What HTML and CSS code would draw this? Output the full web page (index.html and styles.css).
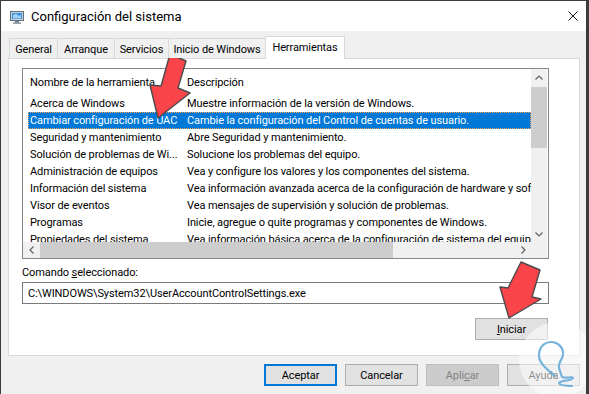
FILE: index.html
```html
<!DOCTYPE html>
<html lang="es">
<head>
  <meta charset="UTF-8">
  <title>Configuración del sistema</title>
  <link rel="stylesheet" href="styles.css">
</head>
<body>
  <div class="window">
    <div class="titlebar">
      <svg class="app-icon" width="14" height="14" viewBox="0 0 14 14">
        <rect x="0.5" y="1.5" width="13" height="9" fill="#c9d3dc" stroke="#5f6f7e"/>
        <rect x="2" y="3" width="10" height="6" fill="#3b8fd9"/>
        <path d="M3 5 L6 3.5 L9 6 L11 4.5 L11 8.5 L3 8.5 Z" fill="#9fd0f5"/>
        <rect x="5" y="11" width="4" height="1.5" fill="#6b7a88"/>
        <rect x="3" y="12.5" width="8" height="1.2" fill="#6b7a88"/>
      </svg>
      <span class="title">Configuración del sistema</span>
      <svg class="close" width="10" height="10" viewBox="0 0 10 10">
        <path d="M0.5 0.5 L9.5 9.5 M9.5 0.5 L0.5 9.5" stroke="#111" stroke-width="1"/>
      </svg>
    </div>

    <div class="main">
      <div class="tabs">
        <div class="tab t-general">General</div>
        <div class="tab t-arranque">Arranque</div>
        <div class="tab t-servicios">Servicios</div>
        <div class="tab t-inicio">Inicio de Windows</div>
        <div class="tab t-herr active">Herramientas</div>
      </div>

      <div class="panel">
        <div class="listbox">
          <div class="list-top">
            <div class="list-view">
              <div class="row head"><span class="c1">Nombre de la herramienta</span><span class="c2">Descripción</span></div>
              <div class="row"><span class="c1">Acerca de Windows</span><span class="c2">Muestre información de la versión de Windows.</span></div>
              <div class="row selected"><span class="c1">Cambiar configuración de UAC</span><span class="c2">Cambie la configuración del Control de cuentas de usuario.</span></div>
              <div class="row"><span class="c1">Seguridad y mantenimiento</span><span class="c2">Abre Seguridad y mantenimiento.</span></div>
              <div class="row"><span class="c1">Solución de problemas de Wi...</span><span class="c2">Solucione los problemas del equipo.</span></div>
              <div class="row"><span class="c1">Administración de equipos</span><span class="c2">Vea y configure los valores y los componentes del sistema.</span></div>
              <div class="row"><span class="c1">Información del sistema</span><span class="c2">Vea información avanzada acerca de la configuración de hardware y software.</span></div>
              <div class="row"><span class="c1">Visor de eventos</span><span class="c2">Vea mensajes de supervisión y solución de problemas.</span></div>
              <div class="row"><span class="c1">Programas</span><span class="c2">Inicie, agregue o quite programas y componentes de Windows.</span></div>
              <div class="row"><span class="c1">Propiedades del sistema</span><span class="c2">Vea información básica acerca de la configuración de sistema del equipo.</span></div>
            </div>
            <div class="vscroll">
              <div class="sb-btn">
                <svg width="8" height="5" viewBox="0 0 8 5"><path d="M0.5 4.5 L4 1 L7.5 4.5" fill="none" stroke="#606060" stroke-width="1.2"/></svg>
              </div>
              <div class="vthumb"></div>
              <div class="sb-fill"></div>
              <div class="sb-btn">
                <svg width="8" height="5" viewBox="0 0 8 5"><path d="M0.5 0.5 L4 4 L7.5 0.5" fill="none" stroke="#606060" stroke-width="1.2"/></svg>
              </div>
            </div>
          </div>
          <div class="list-bottom">
            <div class="hscroll">
              <div class="sb-btn">
                <svg width="5" height="8" viewBox="0 0 5 8"><path d="M4.5 0.5 L1 4 L4.5 7.5" fill="none" stroke="#606060" stroke-width="1.2"/></svg>
              </div>
              <div class="hthumb"></div>
              <div class="sb-fill"></div>
              <div class="sb-btn">
                <svg width="5" height="8" viewBox="0 0 5 8"><path d="M0.5 0.5 L4 4 L0.5 7.5" fill="none" stroke="#606060" stroke-width="1.2"/></svg>
              </div>
            </div>
            <div class="corner"></div>
          </div>
        </div>

        <div class="cmd-label">Comando <u>s</u>eleccionado:</div>
        <div class="cmd-box">C:\WINDOWS\System32\UserAccountControlSettings.exe</div>
        <div class="run-row">
          <button class="btn"><u>I</u>niciar</button>
        </div>
      </div>

      <div class="footer">
        <button class="btn default">Aceptar</button>
        <button class="btn">Cancelar</button>
        <button class="btn disabled">Apli<u>c</u>ar</button>
        <button class="btn">Ayuda</button>
      </div>
    </div>

    <!-- arrows and watermark drawn over the dialog -->
    <svg class="overlay" width="585" height="393" viewBox="1 1 585 393">
      <circle cx="557" cy="360" r="38" fill="#ffffff" opacity="0.55"/>
      <path d="M555 376 C548 370 538 363 539 354 C540 345 546 342 551 342 C558 342 564 348 563 355 C562 360 558 363 559 368 L562 377 C566 379 572 376 573 378 C572 381 561 380 559 383 C560 386 568 386 572 386"
            fill="none" stroke="#5ea7d8" stroke-width="2.2" stroke-linecap="round" stroke-linejoin="round" opacity="0.85"/>
      <polygon points="170,54 186,61 178,88 190,93 158,118 150,85 161,86" fill="#f9444a" stroke="#4a4a4a" stroke-width="1.4" stroke-linejoin="round"/>
      <polygon points="521,262 540,270 532,297 541,299 509,318 500,287 508,288" fill="#f9444a" stroke="#4a4a4a" stroke-width="1.4" stroke-linejoin="round"/>
    </svg>
  </div>
</body>
</html>
```

FILE: styles.css
```css
body {
  margin: 0;
  background: #3c3c3c;
  font-family: Roboto, "Noto Sans", sans-serif;
  font-size: 11px;
  letter-spacing: -0.1px;
  color: #000;
}

.window {
  position: relative;
  margin: 1px 0 0 1px;
  width: 585px;
  height: 393px;
  background: #f0f0f0;
  display: flex;
  flex-direction: column;
  overflow: hidden;
}

/* title bar */
.titlebar {
  height: 30px;
  flex: none;
  background: #fff;
  display: flex;
  align-items: center;
  padding-left: 9px;
}

.app-icon {
  flex: none;
  margin-top: 1px;
}

.title {
  margin-left: 7px;
  font-size: 13px;
  letter-spacing: 0;
  flex: 1;
}

.close {
  margin-right: 8px;
}

/* tabs */
.main {
  flex: 1;
  padding-top: 5px;
  display: flex;
  flex-direction: column;
}

.tabs {
  display: flex;
  align-items: flex-end;
  height: 22px;
  margin-left: 8px;
  position: relative;
  z-index: 2;
}

.tab {
  box-sizing: border-box;
  height: 20px;
  border: 1px solid #d9d9d9;
  border-bottom: none;
  background: #f0f0f0;
  display: flex;
  align-items: center;
  justify-content: center;
  margin-right: -1px;
  padding-top: 1px;
}

.t-general { width: 49px; }
.t-arranque { width: 58px; }
.t-servicios { width: 55px; }
.t-inicio { width: 98px; }
.t-herr { width: 80px; }

.tab.active {
  height: 23px;
  margin-bottom: -1px;
  background: #fff;
  padding-bottom: 2px;
}

/* page */
.panel {
  box-sizing: border-box;
  margin-left: 7px;
  width: 572px;
  height: 298px;
  background: #fff;
  border: 1px solid #d9d9d9;
  padding: 9px 0 0 13px;
  display: flex;
  flex-direction: column;
}

.listbox {
  box-sizing: border-box;
  width: 527px;
  height: 191px;
  border: 1px solid #828790;
  display: flex;
  flex-direction: column;
}

.list-top {
  display: flex;
  height: 173px;
}

.list-view {
  width: 508px;
  overflow: hidden;
}

.row {
  display: flex;
  height: 17px;
  align-items: center;
  margin-left: 5px;
  white-space: nowrap;
}

.row.head {
  height: 25px;
  padding-top: 1px;
}

.c1 {
  width: 155px;
  flex: none;
  padding-left: 2px;
  overflow: hidden;
}

.c2 {
  padding-left: 2px;
}

.row.selected {
  background: #0078d7;
  color: #fff;
  box-sizing: border-box;
  border: 1px dotted #f2a65e;
}

.row.selected .c1 {
  padding-left: 1px;
}

/* scroll bars */
.vscroll {
  width: 16px;
  background: #f0f0f0;
  display: flex;
  flex-direction: column;
}

.sb-btn {
  flex: none;
  width: 16px;
  height: 16px;
  display: flex;
  align-items: center;
  justify-content: center;
}

.vthumb {
  height: 61px;
  margin: 2px 0 0;
  background: #cdcdcd;
}

.sb-fill {
  flex: 1;
}

.list-bottom {
  display: flex;
  height: 16px;
}

.hscroll {
  width: 508px;
  background: #f0f0f0;
  display: flex;
}

.hthumb {
  width: 353px;
  margin-left: 1px;
  background: #cdcdcd;
}

.corner {
  width: 16px;
  background: #f0f0f0;
}

/* command */
.cmd-label {
  margin-top: 7px;
  line-height: 14px;
}

.cmd-box {
  box-sizing: border-box;
  margin-top: 2px;
  width: 527px;
  height: 22px;
  border: 1px solid #7a7a7a;
  padding-left: 5px;
  display: flex;
  align-items: center;
}

.run-row {
  width: 527px;
  display: flex;
  justify-content: flex-end;
  margin-top: 14px;
}

.run-row .btn {
  margin-right: 1px;
}

/* buttons */
.btn {
  box-sizing: border-box;
  width: 73px;
  height: 22px;
  padding: 0;
  background: #e1e1e1;
  border: 1px solid #adadad;
  font-family: inherit;
  font-size: 11px;
  letter-spacing: -0.1px;
  color: #000;
}

.btn.default {
  border: 2px solid #0078d7;
}

.btn.disabled {
  background: #cccccc;
  border-color: #bfbfbf;
  color: #838383;
}

.footer {
  display: flex;
  justify-content: flex-end;
  gap: 8px;
  padding: 8px 6px 0 0;
}

.overlay {
  position: absolute;
  left: 0;
  top: 0;
  pointer-events: none;
}
```
